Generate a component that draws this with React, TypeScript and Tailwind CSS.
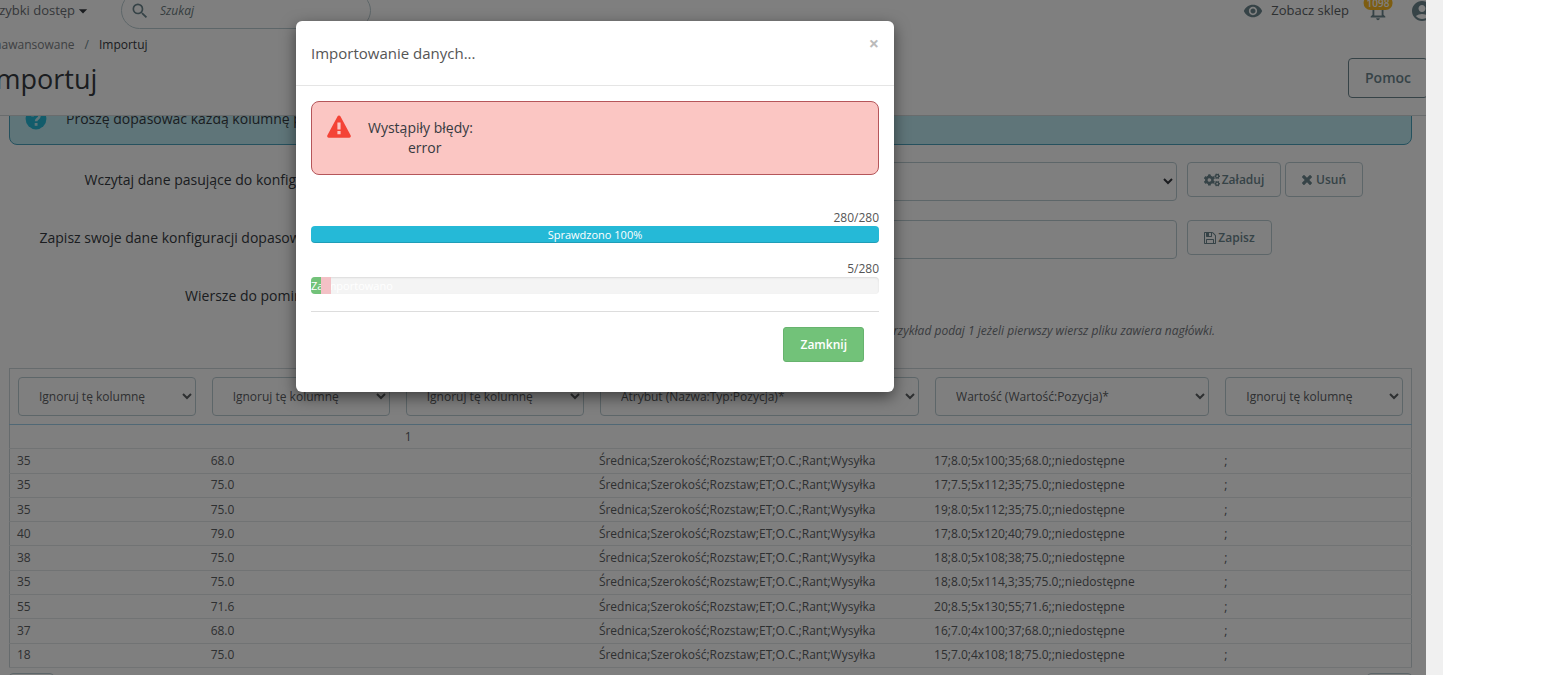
import { FaCogs } from "react-icons/fa";
import {
  MdAccountCircle,
  MdArrowDropDown,
  MdNotificationsNone,
  MdRemoveRedEye,
  MdSearch,
} from "react-icons/md";

const columns = [
  { label: "Ignoruj tę kolumnę", col: "w-[194px]" },
  { label: "Ignoruj tę kolumnę", col: "w-[194px]" },
  { label: "Ignoruj tę kolumnę", col: "w-[194px]" },
  { label: "Atrybut (Nazwa:Typ:Pozycja)*", col: "w-[335px]" },
  { label: "Wartość (Wartość:Pozycja)*", col: "w-[290px]" },
  { label: "Ignoruj tę kolumnę", col: "w-[194px]" },
];

const names = "Średnica;Szerokość;Rozstaw;ET;O.C.;Rant;Wysyłka";

const rows = [
  ["", "", "1", "", "", ""],
  ["35", "68.0", "", names, "17;8.0;5x100;35;68.0;;niedostępne", ";"],
  ["35", "75.0", "", names, "17;7.5;5x112;35;75.0;;niedostępne", ";"],
  ["35", "75.0", "", names, "19;8.0;5x112;35;75.0;;niedostępne", ";"],
  ["40", "79.0", "", names, "17;8.0;5x120;40;79.0;;niedostępne", ";"],
  ["38", "75.0", "", names, "18;8.0;5x108;38;75.0;;niedostępne", ";"],
  ["35", "75.0", "", names, "18;8.0;5x114,3;35;75.0;;niedostępne", ";"],
  ["55", "71.6", "", names, "20;8.5;5x130;55;71.6;;niedostępne", ";"],
  ["37", "68.0", "", names, "16;7.0;4x100;37;68.0;;niedostępne", ";"],
  ["18", "75.0", "", names, "15;7.0;4x108;18;75.0;;niedostępne", ";"],
];

const field = "h-[39px] rounded-[4px] border border-[#bbcdd2] bg-white px-4";
const outlineButton =
  "flex h-[35px] items-center justify-center rounded-[4px] border border-[#bbcdd2] bg-white text-xs font-semibold text-[#6c868e]";

function FloppyIcon() {
  return (
    <svg viewBox="0 128 1536 1536" className="size-3 fill-current" aria-hidden="true">
      <path d="M384 1536h768v-384h-768v384zm896 0h128v-896q0-14-10-38.5t-20-34.5l-281-281q-10-10-34-20t-39-10v416q0 40-28 68t-68 28h-576q-40 0-68-28t-28-68v-416h-128v1280h128v-416q0-40 28-68t68-28h832q40 0 68 28t28 68v416zm-384-928v-320q0-13-9.5-22.5t-22.5-9.5h-192q-13 0-22.5 9.5t-9.5 22.5v320q0 13 9.5 22.5t22.5 9.5h192q13 0 22.5-9.5t9.5-22.5zm640 32v928q0 40-28 68t-68 28h-1344q-40 0-68-28t-28-68v-1344q0-40 28-68t68-28h928q40 0 88 20t76 48l280 280q28 28 48 76t20 88z" />
    </svg>
  );
}

function CrossIcon() {
  return (
    <svg viewBox="110 366 1188 1188" className="size-2.5 fill-current" aria-hidden="true">
      <path d="M1298 1322q0 40-28 68l-136 136q-28 28-68 28t-68-28l-294-294-294 294q-28 28-68 28t-68-28l-136-136q-28-28-28-68t28-68l294-294-294-294q-28-28-28-68t28-68l136-136q28-28 68-28t68 28l294 294 294-294q28-28 68-28t68 28l136 136q28 28 28 68t-28 68l-294 294 294 294q28 28 28 68z" />
    </svg>
  );
}

function HelpIcon() {
  return (
    <svg viewBox="0 0 24 24" className="size-6 shrink-0" fill="none" aria-hidden="true">
      <circle cx="12" cy="12" r="10.4" fill="#25b9d7" />
      <path d="M8.6 9.6c0-4.3 6.8-4.3 6.8-.4 0 2.4-3.3 2.5-3.3 5" stroke="#beeaf3" strokeWidth="2.6" />
      <path d="M10.7 16h2.8v2.8h-2.8z" fill="#beeaf3" />
    </svg>
  );
}

function WarningIcon() {
  return (
    <svg viewBox="0 0 24 23" className="h-[23px] w-6 shrink-0" aria-hidden="true">
      <path
        d="M10.6 1.3a1.6 1.6 0 0 1 2.8 0l10.2 19a1.6 1.6 0 0 1-1.4 2.4H1.8a1.6 1.6 0 0 1-1.4-2.4z"
        fill="#f44336"
      />
      <path d="M10.4 7.5h3.2v7h-3.2zM10.4 16h3.2v3.2h-3.2z" fill="#fbc6c3" />
    </svg>
  );
}

function Header() {
  return (
    <header className="h-[116px] shrink-0 overflow-hidden border-b border-[#d3d8db]">
      <div className="-mt-2 -ml-2 flex h-[37px] items-center text-[13px]">
        <button className="flex w-[101px] items-center whitespace-nowrap text-[#6b6f74]">
          Szybki dostęp
          <MdArrowDropDown className="-ml-0.5 size-5 shrink-0 text-[#363a41]" />
        </button>
        <label className="ml-7 flex h-full w-[250px] items-center gap-2.5 rounded-full border border-[#bbcdd2] px-2">
          <MdSearch className="size-5 shrink-0 text-[#6c868e]" />
          <input
            type="search"
            aria-label="Szukaj"
            placeholder="Szukaj"
            className="w-full text-xs italic outline-none placeholder:text-[#6b7b80]"
          />
        </label>
        <div className="-mr-2 ml-auto flex items-center">
          <a href="#" className="flex items-center gap-2 text-[#5b6063]">
            <MdRemoveRedEye className="size-5 text-[#6c868e]" />
            Zobacz sklep
          </a>
          <button aria-label="Powiadomienia" className="relative ml-[18px]">
            <MdNotificationsNone className="size-[22px] text-[#6c868e]" />
            <span className="absolute -top-1 left-1/2 -translate-x-1/2 rounded-full bg-[#fbbb22] px-[3px] text-[10px] leading-[14px] font-semibold text-white">
              1098
            </span>
          </button>
          <button aria-label="Konto" className="ml-[21px]">
            <MdAccountCircle className="size-6 text-[#6c868e]" />
          </button>
        </div>
      </div>
      <div className="-ml-3 flex items-end">
        <div>
          <nav className="mt-1.5 flex h-5 items-center gap-2.5 text-xs">
            <a href="#" className="text-[#7c8185]">Zaawansowane</a>
            <span className="text-[#6c868e]">/</span>
            <span className="text-[#363a41]">Importuj</span>
          </nav>
          <h1 className="mt-1 text-[27px] leading-10 text-[#363a41]">Importuj</h1>
        </div>
        <button className="-mr-[2px] mb-px ml-auto h-10 w-[80px] rounded-[4px] border border-[#6c868e] text-sm font-semibold text-[#6c868e]">
          Pomoc
        </button>
      </div>
    </header>
  );
}

function ImportForm() {
  return (
    <form className="mt-[17px] flex flex-col gap-[19px] text-sm text-[#363a41]">
      <div className="flex items-start">
        <label htmlFor="load" className="w-[323px] shrink-0 pt-2 text-right">
          Wczytaj dane pasujące do konfiguracji
        </label>
        <select id="load" className={`${field} ml-4 min-w-0 flex-1`} />
        <div className="ml-2.5 flex w-[225px] gap-1">
          <button type="button" className={`${outlineButton} w-[94px] gap-0.5`}>
            <FaCogs className="size-4" />
            Załaduj
          </button>
          <button type="button" className={`${outlineButton} w-[78px] gap-1`}>
            <CrossIcon />
            Usuń
          </button>
        </div>
      </div>
      <div className="flex items-start">
        <label htmlFor="save" className="w-[323px] shrink-0 pt-2 text-right">
          Zapisz swoje dane konfiguracji dopasowania:
        </label>
        <input id="save" type="text" className={`${field} ml-4 min-w-0 flex-1`} />
        <div className="ml-2.5 flex w-[225px]">
          <button type="button" className={`${outlineButton} w-[85px] gap-0.5`}>
            <FloppyIcon />
            Zapisz
          </button>
        </div>
      </div>
      <div className="flex items-start">
        <label htmlFor="skip" className="w-[323px] shrink-0 pt-2 text-right">
          Wiersze do pominięcia
        </label>
        <div className="ml-4 flex-1 pr-[197px]">
          <input id="skip" type="text" defaultValue="0" className={`${field} w-[200px]`} />
          <p className="mt-[5px] text-right text-xs leading-[18px] text-[#75797e] italic">
            Określ ile wierszy ma zostać pominiętych. Na przykład podaj 1 jeżeli pierwszy wiersz pliku zawiera nagłówki.
          </p>
        </div>
      </div>
    </form>
  );
}

function MatchTable() {
  return (
    <table className="mt-7 h-[300px] w-full table-fixed border border-[#ccd6da] text-left text-xs text-[#5c6063]">
      <colgroup>
        {columns.map((c, i) => (
          <col key={i} className={c.col} />
        ))}
      </colgroup>
      <thead>
        <tr className="h-14 border-b border-[#a0d0eb]">
          {columns.map((c, i) => (
            <th key={i} className="px-2 font-normal">
              <select aria-label={`Kolumna ${i + 1}`} className={`${field} w-full`}>
                <option>{c.label}</option>
              </select>
            </th>
          ))}
        </tr>
      </thead>
      <tbody>
        {rows.map((row, i) => (
          <tr key={i} className="h-6 border-b border-[#e2e7e9]">
            {row.map((cell, j) => (
              <td key={j} className="px-[7px] leading-4">
                {cell}
              </td>
            ))}
          </tr>
        ))}
      </tbody>
    </table>
  );
}

function ProgressModal() {
  return (
    <div
      role="dialog"
      aria-label="Importowanie danych"
      className="w-[598px] rounded-md bg-white shadow-[0_5px_15px_rgba(0,0,0,0.5)]"
    >
      <div className="flex h-[65px] items-center justify-between border-b border-[#e5e5e5] px-[15px] text-[#555555]">
        <h2 className="text-[15px]">Importowanie danych...</h2>
        <button aria-label="Zamknij okno" className="mb-5 text-lg leading-6 font-bold text-[#bbbbbb]">
          ×
        </button>
      </div>
      <div className="px-[15px] pt-[15px]">
        <div className="flex h-[74px] rounded-lg border border-[#b5565a] bg-[#fbc6c3] px-[15px] pt-[13px] text-sm leading-5 text-[#363a41]">
          <WarningIcon />
          <div className="mt-[3px] ml-[17px]">
            <p>Wystąpiły błędy:</p>
            <ul className="pl-10">
              <li>error</li>
            </ul>
          </div>
        </div>
        <div className="mt-[34px] text-right text-xs leading-[17px] text-[#555555]">280/280</div>
        <div
          role="progressbar"
          aria-valuenow={100}
          className="h-[17px] rounded-[4px] bg-[#25b9d7] text-center text-[11px] leading-[17px] text-white shadow-[inset_0_-1px_0_rgba(0,0,0,0.15)]"
        >
          Sprawdzono 100%
        </div>
        <div className="mt-[17px] text-right text-xs leading-[17px] text-[#555555]">5/280</div>
        <div
          role="progressbar"
          aria-valuenow={2}
          className="flex h-[17px] rounded-[4px] bg-[#f4f4f4] text-[11px] leading-[17px] text-white shadow-[inset_0_1px_2px_rgba(0,0,0,0.1)]"
        >
          <span className="w-2.5 rounded-l-[4px] bg-[#72c279]">Zaimportowano</span>
          <span className="relative w-2.5 bg-[#f3c1c6]" />
        </div>
        <div className="mt-[17px] flex justify-end border-t border-[#dddddd] px-[15px] pt-[15px] pb-[30px]">
          <button className="h-[35px] rounded-[3px] border border-[#67b36e] bg-[#72c279] px-4 text-xs font-semibold text-white">
            Zamknij
          </button>
        </div>
      </div>
    </div>
  );
}

export default function App() {
  return (
    <div className="flex h-screen overflow-hidden bg-white font-['Open_Sans',sans-serif]">
      <div className="relative flex min-w-0 flex-1 flex-col overflow-hidden">
        <Header />
        <main className="min-h-0 flex-1 overflow-hidden pr-[14px] pl-[9px]">
          <div className="-mt-4 flex h-[45px] items-center gap-[18px] rounded-lg border border-[#4ba3bd] bg-[#beeaf3] px-[14px] pb-2 text-sm text-[#363a41]">
            <HelpIcon />
            Proszę dopasować każdą kolumnę pliku źródłowego do jednej z kolumn docelowych.
          </div>
          <ImportForm />
          <MatchTable />
          <div className="mt-[5px] flex justify-between">
            <button aria-label="Poprzednie" className={`${outlineButton} w-[45px]`} />
            <button aria-label="Następne" className={`${outlineButton} w-[45px]`} />
          </div>
        </main>
        <div className="absolute inset-0 flex items-start justify-center bg-black/50 pt-[21px] pr-[236px]">
          <ProgressModal />
        </div>
      </div>
      <div className="w-[17px] shrink-0 bg-[#f0f0f0]" />
      <div className="w-[99px] shrink-0" />
    </div>
  );
}
